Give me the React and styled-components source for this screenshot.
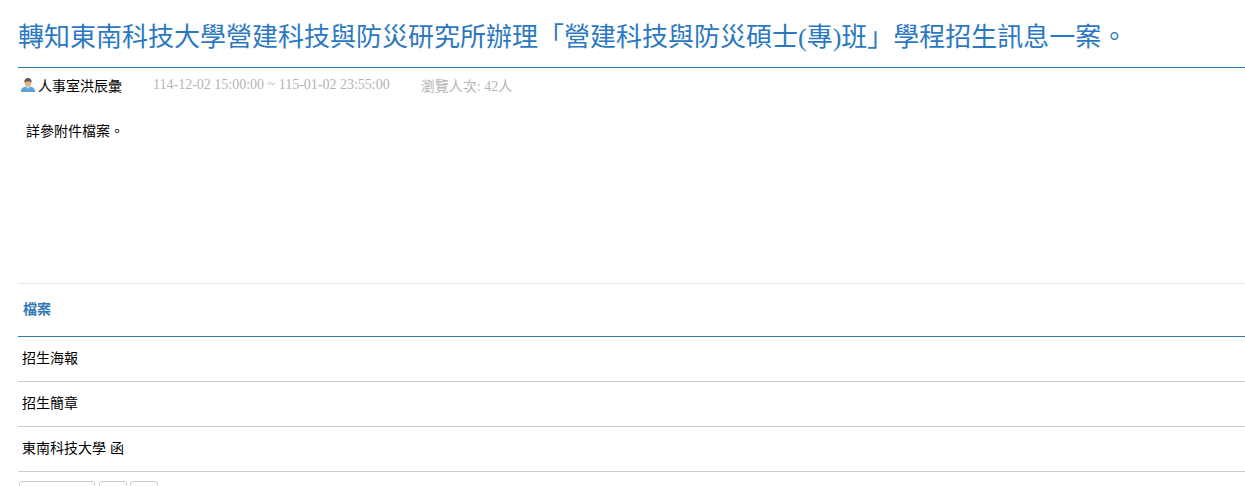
import React from 'react'
import styled, { createGlobalStyle } from 'styled-components'

const GlobalStyle = createGlobalStyle`
html, body {
  margin: 0;
  padding: 0;
  background: #fff;
}
body {
  font-family: "Liberation Sans", "Noto Sans CJK TC", sans-serif;
  font-size: 14px;
  color: #000;
}
`

const Page = styled.div`
  margin-left: 18px;
  width: 1227px;
  height: 486px;
  overflow: hidden;
`

const Title = styled.h1`
  margin: 0;
  height: 68px;
  padding-top: 22px;
  box-sizing: border-box;
  border-bottom: 1px solid #337ab7;
  font-family: "Liberation Serif", "Noto Sans CJK TC", serif;
  font-size: 26px;
  font-weight: 400;
  line-height: 32px;
  color: #2b78c2;
  white-space: nowrap;
`

const Meta = styled.div`
  display: flex;
  align-items: center;
  height: 36px;
  padding: 0 0 2px 2px;
  box-sizing: border-box;
`

const Author = styled.span`
  display: flex;
  align-items: center;
  gap: 2px;
  width: 133px;
`

const Muted = styled.span`
  font-family: "Liberation Serif", "Noto Sans CJK TC", serif;
  color: #b4b4b4;
  margin-right: ${(p) => p.$gap || 0}px;
`

const Body = styled.div`
  height: 180px;
  padding: 17px 0 0 8px;
  box-sizing: border-box;
  border-bottom: 1px solid #e8e8e8;
  line-height: 20px;
`

const FileHead = styled.div`
  height: 53px;
  padding: 0 0 5px 5px;
  display: flex;
  align-items: center;
  box-sizing: border-box;
  border-bottom: 1px solid #337ab7;
  font-weight: 700;
  color: #337ab7;
`

const FileRow = styled.div`
  height: 45px;
  padding: 0 0 5px 4px;
  display: flex;
  align-items: center;
  box-sizing: border-box;
  border-bottom: 1px solid #ccc;
`

const Buttons = styled.div`
  display: flex;
  gap: 3.5px;
  margin-top: 9px;
  padding-left: 1px;
`

const Button = styled.div`
  width: ${(p) => p.$w}px;
  height: 30px;
  box-sizing: border-box;
  border: 1px solid #ccc;
  border-radius: 3px;
  background: #fff;
`

function UserIcon() {
  return (
    <svg width="16" height="16" viewBox="0 0 16 16">
      <path d="M1 15v-1.500C1 11 4 10 6 9.500h4c2 .5 5 1.500 5 4V15z" fill="#5aa5d6" />
      <path d="M6 9.500h4L8 12z" fill="#cfe6f5" />
      <ellipse cx="8" cy="5.500" rx="3.400" ry="4.200" fill="#e2b48c" />
      <path d="M4.500 5.500C4 2.500 6 1 8 1s4 1.500 3.500 4.500C10.500 4 6 4 4.500 5.500z" fill="#6b5a4c" />
    </svg>
  )
}

export default function App() {
  return (
    <Page>
      <GlobalStyle />
      <Title>轉知東南科技大學營建科技與防災研究所辦理「營建科技與防災碩士(專)班」學程招生訊息一案。</Title>
      <Meta>
        <Author>
          <UserIcon />
          人事室洪辰彙
        </Author>
        <Muted $gap={31}>114-12-02 15:00:00 ~ 115-01-02 23:55:00</Muted>
        <Muted>瀏覽人次: 42人</Muted>
      </Meta>
      <Body>詳參附件檔案。</Body>
      <FileHead>檔案</FileHead>
      <FileRow>招生海報</FileRow>
      <FileRow>招生簡章</FileRow>
      <FileRow>東南科技大學 函</FileRow>
      <Buttons>
        <Button $w={76} />
        <Button $w={28} />
        <Button $w={28} />
      </Buttons>
    </Page>
  )
}
